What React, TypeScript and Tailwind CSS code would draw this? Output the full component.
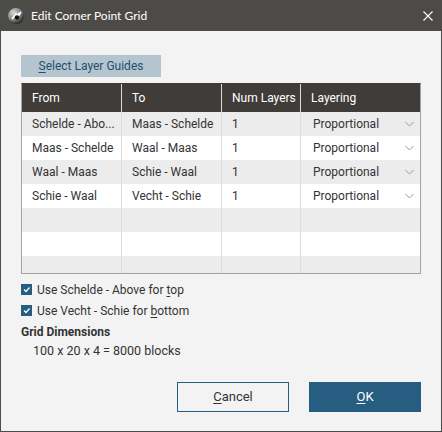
import { ReactNode } from "react";

const rows = [
  { from: "Schelde - Abo...", to: "Maas - Schelde", layers: "1", layering: "Proportional" },
  { from: "Maas - Schelde", to: "Waal - Maas", layers: "1", layering: "Proportional" },
  { from: "Waal - Maas", to: "Schie - Waal", layers: "1", layering: "Proportional" },
  { from: "Schie - Waal", to: "Vecht - Schie", layers: "1", layering: "Proportional" },
  null,
  null,
  null,
];

function Chevron() {
  return (
    <svg width="9" height="6" viewBox="0 0 9 6" className="mr-[6px]">
      <path d="M0.5 1 L4.5 5 L8.5 1" fill="none" stroke="#9a9a9a" strokeWidth="1" />
    </svg>
  );
}

function AppIcon() {
  return (
    <svg width="16" height="16" viewBox="0 0 16 16">
      <defs>
        <radialGradient id="g" cx="35%" cy="30%" r="75%">
          <stop offset="0%" stopColor="#d8d8d8" />
          <stop offset="55%" stopColor="#8a8a8a" />
          <stop offset="100%" stopColor="#1e1e1e" />
        </radialGradient>
      </defs>
      <circle cx="8" cy="8" r="8" fill="url(#g)" />
      <path d="M4 11 L8 6 L10 8 L13 4" fill="none" stroke="#fff" strokeWidth="1.6" />
      <circle cx="9" cy="9.5" r="2.2" fill="#111" />
      <circle cx="11" cy="6" r="1.3" fill="#fff" />
    </svg>
  );
}

function Check({ children }: { children: ReactNode }) {
  return (
    <div className="flex items-center h-[21px]">
      <span className="w-[11px] h-[11px] bg-[#275d80] flex items-center justify-center">
        <svg width="9" height="9" viewBox="0 0 9 9">
          <path d="M2 4.5 L4 6.5 L7.5 2.5" fill="none" stroke="#fff" strokeWidth="1.3" />
        </svg>
      </span>
      <span className="ml-[5px] text-[12px] text-[#333]">{children}</span>
    </div>
  );
}

function Cell({ children, first }: { children?: ReactNode; first?: boolean }) {
  return (
    <div className={`flex items-center ${first ? "" : "border-l border-[#dcdcdc]"} pl-[10px] overflow-hidden whitespace-nowrap`}>
      {children}
    </div>
  );
}

export default function App() {
  return (
    <div
      className="w-[442px] h-[432px] flex flex-col bg-[#f3f3f3] border-x border-b border-[#4d4b48]"
      style={{ fontFamily: "Roboto, 'Liberation Sans', sans-serif" }}
    >
      {/* Title bar */}
      <div className="h-[31px] shrink-0 bg-[#4d4b48] flex items-center pl-[8px] pr-[9px] text-white -mx-px">
        <AppIcon />
        <span className="ml-[7px] text-[12px]" style={{ fontFamily: "Lato, 'Open Sans', sans-serif" }}>
          Edit Corner Point Grid
        </span>
        <svg width="10" height="10" viewBox="0 0 10 10" className="ml-auto">
          <path d="M0.5 0.5 L9.5 9.5 M9.5 0.5 L0.5 9.5" stroke="#fff" strokeWidth="1.1" />
        </svg>
      </div>

      <div className="flex flex-col px-[20px] pt-[24px]">
        <button className="w-[140px] h-[22px] bg-[#b4c5cf] text-[12px] text-[#24506e]">
          <span className="underline underline-offset-2">S</span>elect Layer Guides
        </button>

        {/* Table */}
        <div className="mt-[6px] h-[191px] w-[400px] border border-[#a3a3a3] border-t-[#403c3a] overflow-hidden text-[12px]">
          <div className="grid grid-cols-[99px_100px_79px_120px] h-[28px] bg-[#403c3a] text-white">
            <Cell first>From</Cell>
            <Cell>To</Cell>
            <Cell>Num Layers</Cell>
            <Cell>Layering</Cell>
          </div>
          {rows.map((r, i) => (
            <div
              key={i}
              className={`grid grid-cols-[99px_100px_79px_120px] h-[24px] text-[#333] ${i % 2 === 0 ? "bg-[#ececec]" : "bg-white"}`}
            >
              <Cell first>{r?.from}</Cell>
              <Cell>{r?.to}</Cell>
              <Cell>{r?.layers}</Cell>
              <Cell>
                {r && (
                  <div className="flex items-center justify-between w-full pl-[2px]">
                    <span>{r.layering}</span>
                    <Chevron />
                  </div>
                )}
              </Cell>
            </div>
          ))}
        </div>

        <div className="mt-[5px]">
          <Check>
            Use Schelde - Above for <span className="underline underline-offset-2">t</span>op
          </Check>
          <Check>
            Use Vecht - Schie for <span className="underline underline-offset-2">b</span>ottom
          </Check>
        </div>
        <div className="mt-[2px] text-[12px] font-bold text-[#333]">Grid Dimensions</div>
        <div className="mt-[1px] ml-[12px] text-[12.5px] text-[#333]">100 x 20 x 4 = 8000 blocks</div>

        <div className="flex justify-end gap-[20px] mt-[21px]">
          <button className="w-[112px] h-[30px] border border-[#275d80] text-[13px] text-[#333]">
            <span className="underline underline-offset-2">C</span>ancel
          </button>
          <button className="w-[112px] h-[30px] bg-[#275d80] text-[13px] text-white">
            <span className="underline underline-offset-2">O</span>K
          </button>
        </div>
      </div>
    </div>
  );
}
